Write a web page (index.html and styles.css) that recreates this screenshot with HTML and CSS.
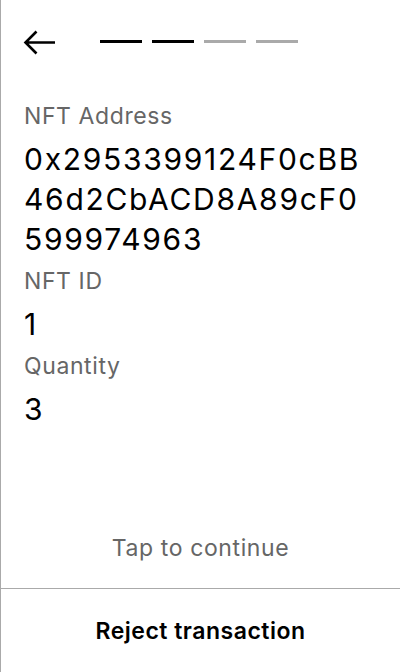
FILE: index.html
```html
<!DOCTYPE html>
<html>
<head>
<meta charset="utf-8">
<link rel="stylesheet" href="styles.css">
</head>
<body>
<div class="screen">
  <header class="header">
    <svg class="back" width="34" height="28" viewBox="0 0 34 28">
      <path d="M32 13.5H2.5M13.5 2.5L2.5 13.5L13.5 24.5" fill="none" stroke="#000" stroke-width="2.6"/>
    </svg>
    <div class="steps">
      <span class="step done"></span>
      <span class="step done"></span>
      <span class="step"></span>
      <span class="step"></span>
    </div>
  </header>
  <main class="content">
    <div class="label">NFT Address</div>
    <div class="value">0x2953399124F0cBB<br>46d2CbACD8A89cF0<br>599974963</div>
    <div class="label">NFT ID</div>
    <div class="value">1</div>
    <div class="label">Quantity</div>
    <div class="value">3</div>
  </main>
  <div class="tap">Tap to continue</div>
  <footer class="footer">Reject transaction</footer>
</div>
</body>
</html>
```
FILE: styles.css
```css
html, body {
  margin: 0;
  padding: 0;
  background: #fff;
}
.screen {
  height: 672px;
  box-sizing: border-box;
  border-left: 1px solid #aaa;
  display: flex;
  flex-direction: column;
  font-family: Inter, "Liberation Sans", sans-serif;
  color: #000;
}
.header {
  display: flex;
  align-items: center;
  padding: 29px 0 0 22px;
  height: 28px;
}
.back {
  display: block;
}
.steps {
  display: flex;
  gap: 10px;
  margin-left: 43px;
  margin-top: -4px;
}
.step {
  width: 42px;
  height: 3px;
  background: #aaa;
}
.step.done {
  background: #000;
}
.content {
  flex: 1;
  padding: 44px 16px 0 23px;
}
.label {
  font-size: 23px;
  line-height: 30px;
  letter-spacing: 0.6px;
  color: #666;
}
.value {
  font-size: 30px;
  line-height: 40px;
  letter-spacing: 1.7px;
  margin-top: 8px;
  margin-bottom: 7px;
}
.tap {
  text-align: center;
  font-size: 23px;
  letter-spacing: 0.6px;
  color: #666;
  line-height: 28px;
  padding-bottom: 26px;
}
.footer {
  border-top: 1px solid #aaa;
  height: 83px;
  display: flex;
  align-items: center;
  justify-content: center;
  font-weight: 600;
  font-size: 23px;
  letter-spacing: 0.5px;
}
```
